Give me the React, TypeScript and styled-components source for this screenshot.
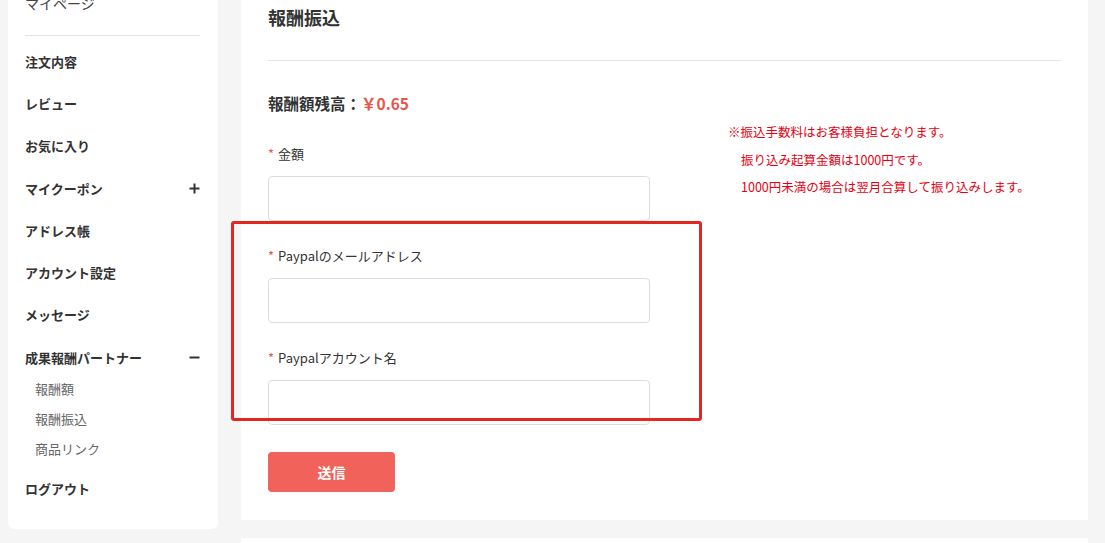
import * as React from 'react';
import styled, { createGlobalStyle } from 'styled-components';

const GlobalStyle = createGlobalStyle`
    html, body {
        margin : 0;
        padding : 0;
        background-color : #f5f5f5;
        font-family : "Noto Sans CJK JP", "Noto Sans", sans-serif;
        color : #333;
    }
`

const menu = [
    { label: '注文内容' },
    { label: 'レビュー' },
    { label: 'お気に入り' },
    { label: 'マイクーポン', toggle: 'plus' },
    { label: 'アドレス帳' },
    { label: 'アカウント設定' },
    { label: 'メッセージ' },
    { label: '成果報酬パートナー', toggle: 'minus' },
]

const subMenu = ['報酬額', '報酬振込', '商品リンク']

const notes = [
    '※振込手数料はお客様負担となります。',
    '振り込み起算金額は1000円です。',
    '1000円未満の場合は翌月合算して振り込みします。',
]

function Toggle({ kind }: { kind: string }) {
    return (
        <svg width="11" height="11" viewBox="0 0 11 11">
            <rect x="0.5" y="4.5" width="10" height="2" fill="#333" />
            {kind === 'plus' && <rect x="4.5" y="0.5" width="2" height="10" fill="#333" />}
        </svg>
    )
}

export default function App() {
    return (
        <>
            <GlobalStyle />
            <Page>
                <Sidebar>
                    <TopItem>マイページ</TopItem>
                    <Divider />
                    {menu.map((m) => (
                        <MenuItem key={m.label}>
                            <span>{m.label}</span>
                            {m.toggle && <Toggle kind={m.toggle} />}
                        </MenuItem>
                    ))}
                    <SubList>
                        {subMenu.map((s) => (
                            <SubItem key={s}>{s}</SubItem>
                        ))}
                    </SubList>
                    <MenuItem>ログアウト</MenuItem>
                </Sidebar>

                <MainColumn>
                    <Panel>
                        <Title>報酬振込</Title>
                        <Rule />
                        <Body>
                            <FormColumn>
                                <Balance>
                                    報酬額残高：<Amount>￥0.65</Amount>
                                </Balance>
                                <Field>
                                    <Label><Req>*</Req>金額</Label>
                                    <Input />
                                </Field>
                                <Highlighted>
                                    <Field>
                                        <Label><Req>*</Req>Paypalのメールアドレス</Label>
                                        <Input />
                                    </Field>
                                    <Field>
                                        <Label><Req>*</Req>Paypalアカウント名</Label>
                                        <Input />
                                    </Field>
                                    <Marker />
                                </Highlighted>
                                <Submit>送信</Submit>
                            </FormColumn>
                            <Notes>
                                {notes.map((n, i) => (
                                    <Note key={n} indent={i > 0}>{n}</Note>
                                ))}
                            </Notes>
                        </Body>
                    </Panel>
                    <NextPanel />
                </MainColumn>
            </Page>
        </>
    )
}

const Page = styled.div`
    display : flex;
    align-items : flex-start;
    gap : 23px;
    padding-left : 8px;
    margin-top : -20px;
    height : 563px;
    overflow : hidden;
`

const Sidebar = styled.div`
    width : 210px;
    box-sizing : border-box;
    background-color : white;
    border-radius : 0 0 6px 6px;
    padding : 2px 18px 19px 17px;
    display : flex;
    flex-direction : column;
`

const TopItem = styled.div`
    height : 42px;
    line-height : 42px;
    font-size : 14px;
    color : #444;
`

const Divider = styled.div`
    height : 1px;
    background-color : #e2e2e2;
    margin : 11px 0 4px 0;
`

const MenuItem = styled.div`
    height : 42.3px;
    display : flex;
    align-items : center;
    justify-content : space-between;
    font-size : 13px;
    font-weight : bold;
    color : #333;
`

const SubList = styled.div`
    margin : -4px 0 3px 10px;
`

const SubItem = styled.div`
    height : 30px;
    line-height : 30px;
    font-size : 13px;
    color : #666;
`

const MainColumn = styled.div`
    width : 847px;
    display : flex;
    flex-direction : column;
    gap : 18px;
`

const Panel = styled.div`
    background-color : white;
    padding : 27px 27px 28px 27px;
`

const NextPanel = styled.div`
    background-color : white;
    height : 40px;
`

const Title = styled.div`
    font-size : 18px;
    font-weight : bold;
    line-height : 20px;
`

const Rule = styled.div`
    height : 1px;
    background-color : #e5e5e5;
    margin-top : 33px;
`

const Body = styled.div`
    display : flex;
    align-items : flex-start;
`

const FormColumn = styled.div`
    width : 382px;
    display : flex;
    flex-direction : column;
`

const Balance = styled.div`
    margin-top : 31px;
    font-size : 15.5px;
    font-weight : bold;
    line-height : 22px;
    margin-bottom : 30px;
`

const Amount = styled.span`
    color : #e8554c;
`

const Field = styled.div`
    display : flex;
    flex-direction : column;
    margin-bottom : 25px;
`

const Label = styled.div`
    font-size : 13px;
    line-height : 20px;
    margin-bottom : 12px;
    color : #333;
`

const Req = styled.span`
    color : #e8554c;
    margin-right : 4px;
`

const Input = styled.input`
    height : 45px;
    box-sizing : border-box;
    border : 1px solid #dcdcdc;
    border-radius : 4px;
    outline : none;
    padding : 0 12px;
`

const Highlighted = styled.div`
    position : relative;
`

const Marker = styled.div`
    position : absolute;
    left : -37px;
    top : -25px;
    width : 471px;
    height : 200px;
    box-sizing : border-box;
    border : 3px solid #e3261f;
    border-radius : 3px;
    pointer-events : none;
`

const Submit = styled.button`
    margin-top : 2px;
    width : 127px;
    height : 40px;
    border : none;
    border-radius : 4px;
    background-color : #f0625a;
    color : white;
    font-family : inherit;
    font-size : 14px;
    font-weight : bold;
`

const Notes = styled.div`
    margin-left : 78px;
    padding-top : 57px;
    display : flex;
    flex-direction : column;
`

const Note = styled.div<{ indent?: boolean }>`
    font-size : 12.5px;
    line-height : 27.5px;
    color : #e60012;
    padding-left : ${(p) => (p.indent ? '13px' : '0')};
`
